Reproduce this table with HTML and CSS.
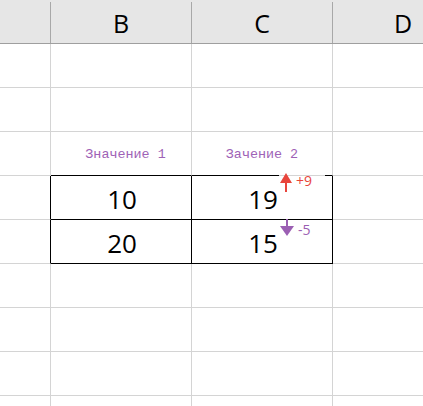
FILE: index.html
```html
<!DOCTYPE html>
<html>
<head>
<meta charset="utf-8">
<link rel="stylesheet" href="styles.css">
</head>
<body>
<div class="sheet">
  <div class="head">
    <div class="hc colA"></div>
    <div class="hc">B</div>
    <div class="hc">C</div>
    <div class="hc colD">D</div>
  </div>
  <div class="grid">
    <div class="c"></div><div class="c"></div><div class="c"></div><div class="c"></div>
    <div class="c"></div><div class="c"></div><div class="c"></div><div class="c"></div>
    <div class="c"></div><div class="c lbl lbl1 tb">Значение 1</div><div class="c lbl tb">Зачение 2</div><div class="c"></div>
    <div class="c bl"></div><div class="c num tb br">10</div><div class="c num tb br up">19
      <span class="gap"></span>
      <svg class="arr arr-up" width="14" height="21" viewBox="0 0 14 21"><polygon points="7,1 1,11 13,11" fill="#e8453c"/><rect x="6" y="10" width="2" height="10" fill="#e8453c"/></svg>
      <span class="delta plus">+9</span>
    </div><div class="c"></div>
    <div class="c bl"></div><div class="c num tb br">20</div><div class="c num tb br">15
      <svg class="arr arr-down" width="16" height="18" viewBox="0 0 16 18"><rect x="7" y="0" width="2" height="8" fill="#9b5fb3"/><polygon points="1,7 15,7 8,17" fill="#9b5fb3"/></svg>
      <span class="delta minus">-5</span>
    </div><div class="c"></div>
    <div class="c"></div><div class="c"></div><div class="c"></div><div class="c"></div>
    <div class="c"></div><div class="c"></div><div class="c"></div><div class="c"></div>
    <div class="c"></div><div class="c"></div><div class="c"></div><div class="c"></div>
    <div class="c"></div><div class="c"></div><div class="c"></div><div class="c"></div>
  </div>
</div>
</body>
</html>
```
FILE: styles.css
```css
html, body {
  margin: 0;
  padding: 0;
  background: #fff;
  overflow: hidden;
}
.sheet {
  width: 423px;
  height: 406px;
  overflow: hidden;
  font-family: "Open Sans", "Liberation Sans", sans-serif;
}
.head {
  display: flex;
  background: #e6e6e6;
  padding-top: 2px;
  border-bottom: 1px solid #9f9f9f;
}
.hc {
  box-sizing: border-box;
  width: 141px;
  height: 41px;
  border-right: 1px solid #a8a8a8;
  display: flex;
  align-items: center;
  justify-content: center;
  font-size: 25px;
  color: #000;
  padding-top: 1px;
}
.hc.colA { width: 51px; }
.hc.colD { width: 90px; border-right: none; padding-left: 50px; }
.grid {
  display: grid;
  grid-template-columns: 51px 141px 141px 90px;
  grid-auto-rows: 44px;
}
.c {
  box-sizing: border-box;
  border-right: 1px solid #d4d4d4;
  border-bottom: 1px solid #d4d4d4;
  position: relative;
}
.grid > .c:nth-child(4n) { border-right: none; }
.tb { border-bottom-color: #000; }
.br { border-right-color: #000; }
.bl { border-right-color: #000; }
.lbl {
  display: flex;
  align-items: center;
  justify-content: center;
  font-family: "Liberation Mono", monospace;
  font-size: 13.4px;
  color: #9e62b6;
  padding-top: 2px;
}
.lbl1 { padding-left: 9px; }
.num {
  display: flex;
  align-items: flex-end;
  justify-content: center;
  font-size: 26px;
  line-height: 1;
  padding-bottom: 7px;
  padding-left: 2px;
  color: #000;
}
.gap {
  position: absolute;
  left: 87px;
  top: -1px;
  width: 46px;
  height: 1px;
  background: #d4d4d4;
}
.arr { position: absolute; }
.arr-up { left: 87px; top: -4px; }
.arr-down { left: 87px; top: -1px; }
.delta {
  position: absolute;
  font-family: "Open Sans", "Liberation Sans", sans-serif;
  font-size: 14px;
  line-height: 14px;
}
.plus { left: 104px; top: -2px; color: #e8453c; }
.minus { left: 106px; top: 3px; color: #9b5fb3; }
```
